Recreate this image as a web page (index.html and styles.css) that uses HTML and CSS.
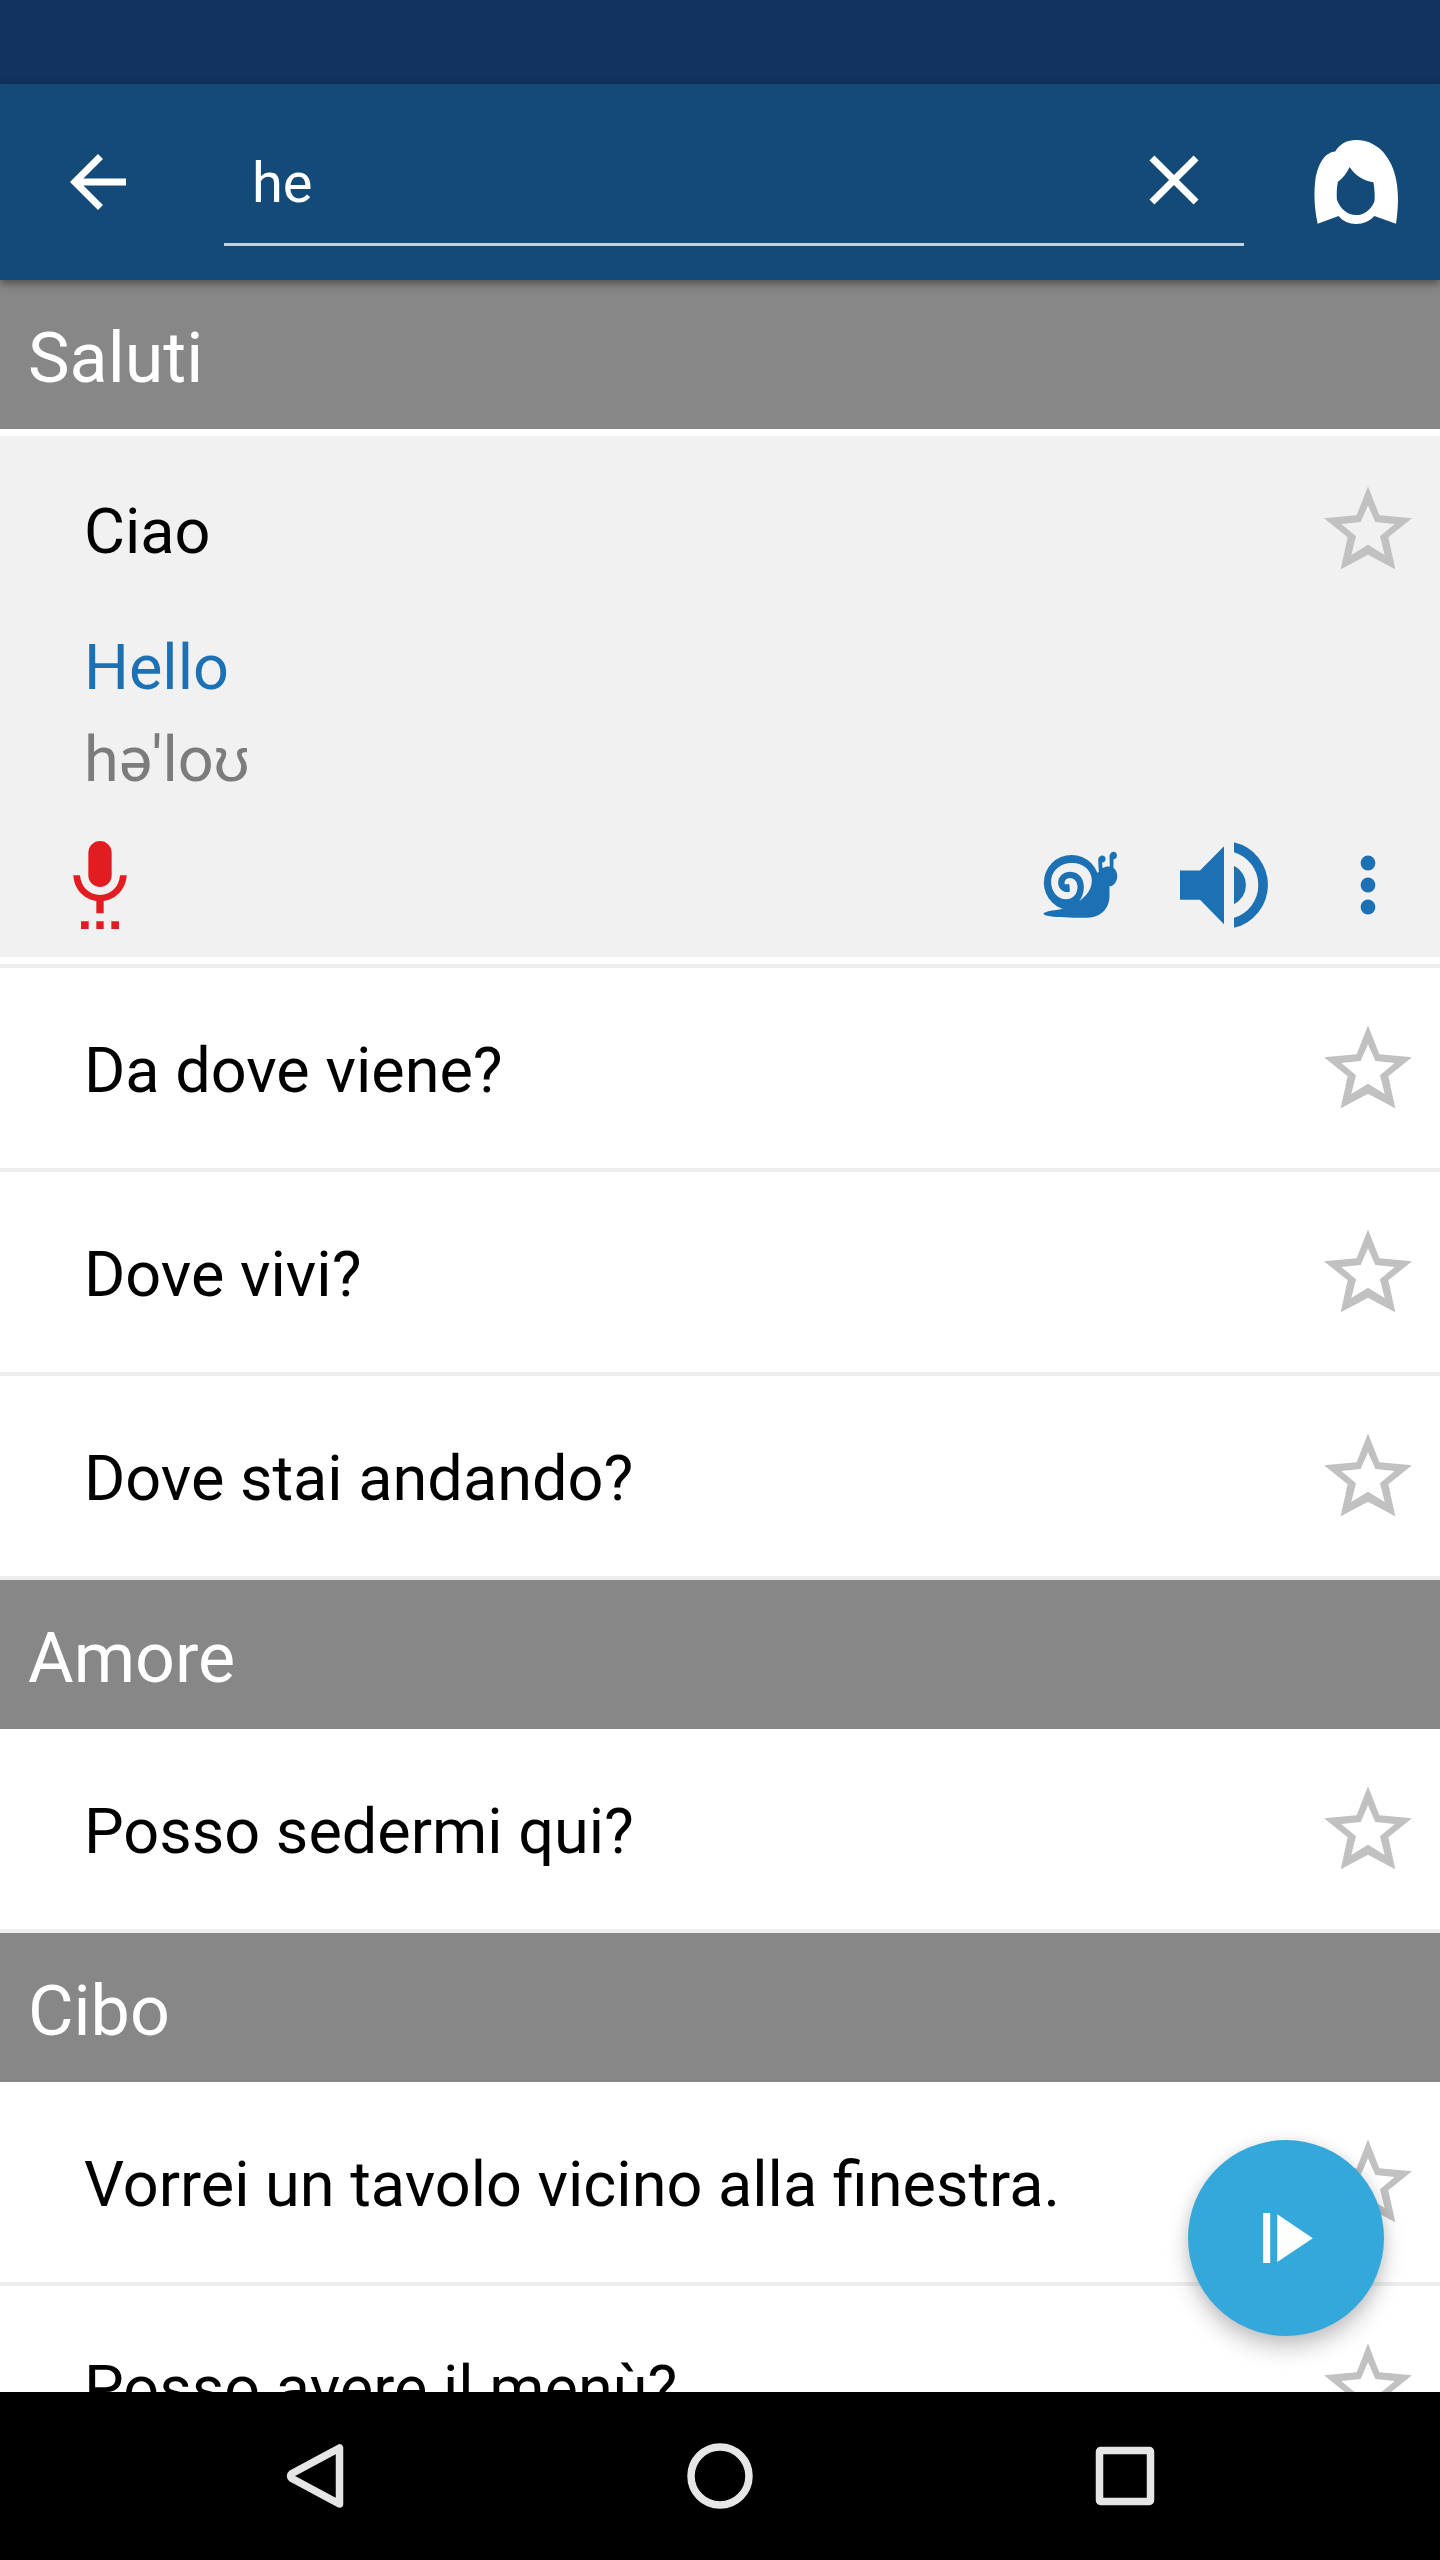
FILE: index.html
```html
<!DOCTYPE html>
<html lang="it">
<head>
    <meta charset="UTF-8">
    <meta name="viewport" content="width=device-width, initial-scale=1.0">
    <title>Frasi</title>
    <link rel="stylesheet" href="styles.css">
</head>
<body>
    <!-- Star icon shared by every row -->
    <svg class="sprite">
        <symbol id="star" viewBox="0 0 264 246">
            <path fill-rule="evenodd" d="M132 -2L166 85L264 94L193 151L214 247L132 203L50 247L71 151L0 94L98 85ZM132 55L110 105L52 111L96 148L82 204L132 173L182 204L168 148L212 111L154 105Z"/>
        </symbol>
    </svg>

    <div class="status-bar"></div>

    <!-- Search Bar -->
    <header class="toolbar">
        <svg class="icon-back" viewBox="0 0 24 24"><path d="M20 11H7.83l5.59-5.59L12 4l-8 8 8 8 1.41-1.41L7.83 13H20v-2z"/></svg>
        <div class="search">
            <span class="search-text">he</span>
            <svg class="icon-close" viewBox="0 0 24 24"><path d="M19 6.41L17.59 5 12 10.59 6.41 5 5 6.41 10.59 12 5 17.59 6.41 19 12 13.41 17.59 19 19 17.59 13.41 12z"/></svg>
        </div>
        <svg class="icon-woman" viewBox="641 239 253 253">
            <path fill-rule="evenodd" d="M652 491C642 445 640 400 645 360C653 312 672 277 705 274C718 250 742 239 768 239C842 239 894 308 894 415C894 445 891 470 888 491L823 468C808 484 790 492 768 492C746 492 728 484 715 468ZM748 320C740 338 727 355 713 365C709 385 709 405 710 419C720 447 742 465 768 465C792 465 812 450 823 424C825 405 823 385 820 366C790 362 765 345 748 320Z"/>
        </svg>
    </header>

    <!-- Phrase List -->
    <main class="list">
        <h2 class="section">Saluti</h2>

        <div class="open">
            <div class="open-card">
                <div class="phrase open-head">
                    <span>Ciao</span>
                    <svg class="star"><use href="#star"/></svg>
                </div>
                <p class="translation">Hello</p>
                <p class="phonetic">hə'loʊ</p>
                <div class="actions">
                    <svg class="icon-mic" viewBox="220 123 160 264">
                        <rect x="265" y="123" width="70" height="138" rx="35"/>
                        <path d="M220 226H240C243 262 268 285 300 285C332 285 357 262 360 226H380C378 266 350 298 311 303V340H289V303C250 298 222 266 220 226Z"/>
                        <path d="M243 364h23v23h-23zM289 364h22v23h-22zM334 364h23v23h-23z"/>
                    </svg>
                    <svg class="icon-snail" viewBox="129 154 224 201">
                        <circle cx="214" cy="249" r="83"/>
                        <path d="M130 341C140 332 168 332 190 327L236 305C262 288 282 258 288 222L296 216L294 178C297 165 314 164 316 175C317 184 312 189 306 188L307 206C313 202 321 200 329 201L328 168C331 153 349 153 350 165C351 174 346 179 340 178L340 204C351 213 354 228 349 242C344 255 337 260 328 260V288C328 328 300 353 262 354H220C185 353 150 352 135 347Q129 344 130 341Z"/>
                        <path class="shell-gap" d="M237 305C260 288 275 268 275 242C274 211 249 190 216 190C181 190 153 213 153 247C153 275 172 299 198 299C219 299 233 281 232 260C231 244 221 235 208 235C197 236 191 245 194 254L202 254C203 251 206 252 208 257L209 276C190 282 174 266 174 250C174 229 190 216 211 216C236 217 251 236 251 262C251 279 246 293 237 305Z"/>
                    </svg>
                    <svg class="icon-speaker" viewBox="540 126 264 257">
                        <path d="M540 211H600L672 138V372L600 299H540ZM702 197A64 64 0 0 1 702 312ZM702 126A132 132 0 0 1 702 383V353A103 103 0 0 0 702 156Z"/>
                    </svg>
                    <svg class="icon-more" viewBox="0 0 16 60">
                        <circle cx="8" cy="8" r="7.4"/>
                        <circle cx="8" cy="30" r="7.4"/>
                        <circle cx="8" cy="52" r="7.4"/>
                    </svg>
                </div>
            </div>
        </div>

        <div class="phrase"><span>Da dove viene?</span><svg class="star"><use href="#star"/></svg></div>
        <div class="phrase"><span>Dove vivi?</span><svg class="star"><use href="#star"/></svg></div>
        <div class="phrase"><span>Dove stai andando?</span><svg class="star"><use href="#star"/></svg></div>

        <h2 class="section">Amore</h2>
        <div class="phrase"><span>Posso sedermi qui?</span><svg class="star"><use href="#star"/></svg></div>

        <h2 class="section">Cibo</h2>
        <div class="phrase"><span>Vorrei un tavolo vicino alla finestra.</span><svg class="star"><use href="#star"/></svg></div>
        <div class="phrase"><span>Posso avere il menù?</span><svg class="star"><use href="#star"/></svg></div>

        <!-- Floating play button -->
        <div class="fab">
            <svg class="icon-play" viewBox="309 459 148 149"><path d="M309 459h21v149h-21zM351 463L457 534L351 605Z"/></svg>
        </div>
    </main>

    <!-- System Navigation -->
    <nav class="nav">
        <svg class="nav-icon" viewBox="0 0 66 66"><path d="M57.5 5V61L10 35.5Q7 33 10 30.500Z"/></svg>
        <svg class="nav-icon" viewBox="0 0 66 66"><circle cx="33" cy="33" r="29"/></svg>
        <svg class="nav-icon" viewBox="0 0 66 66"><rect x="7.500" y="7.500" width="51" height="51" rx="1"/></svg>
    </nav>
</body>
</html>
```
FILE: styles.css
```css
body {
    margin: 0;
    height: 2560px;
    display: flex;
    flex-direction: column;
    overflow: hidden;
    font-family: Roboto, sans-serif;
    background-color: #fff;
}

svg {
    display: block;
    flex-shrink: 0;
}

.sprite {
    display: none;
}

.status-bar {
    height: 84px;
    flex-shrink: 0;
    background-color: #12325f;
}

/* Search Bar */
.toolbar {
    height: 196px;
    flex-shrink: 0;
    display: flex;
    box-sizing: border-box;
    padding: 0 42px 0 56px;
    background-color: #144a78;
    box-shadow: 0 3px 9px rgba(0, 0, 0, 0.45);
    fill: #fff;
    z-index: 1;
}

.icon-back {
    width: 84px;
    height: 84px;
    margin-top: 56px;
}

.search {
    display: flex;
    align-items: center;
    justify-content: space-between;
    box-sizing: border-box;
    width: 1020px;
    height: 134px;
    margin: 28px 0 0 84px;
    padding: 0 28px;
    border-bottom: 3px solid #c4d2e4;
}

.search-text {
    font-size: 56px;
    line-height: 66px;
    padding-top: 11px;
    color: #fff;
}

.icon-close {
    width: 84px;
    height: 84px;
    margin-top: 5px;
}

.icon-woman {
    width: 84px;
    height: 84px;
    margin: 56px 0 0 auto;
}

/* Phrase List */
.list {
    flex: 1;
    min-height: 0;
    overflow: hidden;
    position: relative;
}

.section {
    box-sizing: border-box;
    height: 149px;
    margin: 0;
    padding: 4px 28px 0;
    font-size: 70px;
    font-weight: 400;
    line-height: 149px;
    color: #fff;
    background-color: #878787;
}

.phrase {
    display: flex;
    align-items: center;
    justify-content: space-between;
    height: 200px;
    padding: 0 28px 0 84px;
    border-bottom: 4px solid #eee;
    font-size: 63px;
    color: #000;
}

.phrase span {
    padding-top: 5px;
}

.star {
    width: 88px;
    height: 82px;
    margin-bottom: 2px;
    overflow: visible;
    fill: #c1c1c1;
}

/* Expanded phrase */
.open {
    border-bottom: 4px solid #eee;
}

.open-card {
    box-sizing: border-box;
    height: 535px;
    border: solid #fff;
    border-width: 7px 0;
    background-color: #f1f1f1;
}

.open-head {
    margin-top: -7px;
    border-bottom: none;
}

.translation,
.phonetic {
    margin: 2px 84px 18px;
    font-size: 63px;
    line-height: 74px;
    color: #1c71b4;
}

.phonetic {
    margin-bottom: 0;
    color: #7c7c7c;
}

.actions {
    display: flex;
    align-items: center;
    height: 88px;
    margin-top: 44px;
    padding: 0 64px 0 73px;
    fill: #1c71b4;
}

.icon-mic {
    width: 54px;
    height: 88px;
    margin-right: auto;
    fill: #e11d21;
}

.icon-snail {
    width: 75px;
    height: 67px;
    margin: 0 62px 2px 0;
}

.shell-gap {
    fill: #f1f1f1;
}

.icon-speaker {
    width: 88px;
    height: 86px;
    margin-right: 92px;
}

.icon-more {
    width: 16px;
    height: 60px;
}

/* Play button */
.fab {
    position: absolute;
    right: 56px;
    bottom: 56px;
    width: 196px;
    height: 196px;
    border-radius: 50%;
    display: flex;
    align-items: center;
    justify-content: center;
    background-color: #35a8db;
    box-shadow: 0 12px 22px rgba(0, 0, 0, 0.22), 0 0 14px rgba(0, 0, 0, 0.08);
}

.icon-play {
    width: 50px;
    height: 50px;
    padding-left: 3px;
    fill: #fff;
}

/* System Navigation */
.nav {
    height: 168px;
    flex-shrink: 0;
    display: flex;
    align-items: center;
    justify-content: center;
    gap: 339px;
    background-color: #000;
}

.nav-icon {
    width: 66px;
    height: 66px;
    fill: none;
    stroke: #e6e6e6;
    stroke-width: 7.5;
    stroke-linejoin: round;
}
```
